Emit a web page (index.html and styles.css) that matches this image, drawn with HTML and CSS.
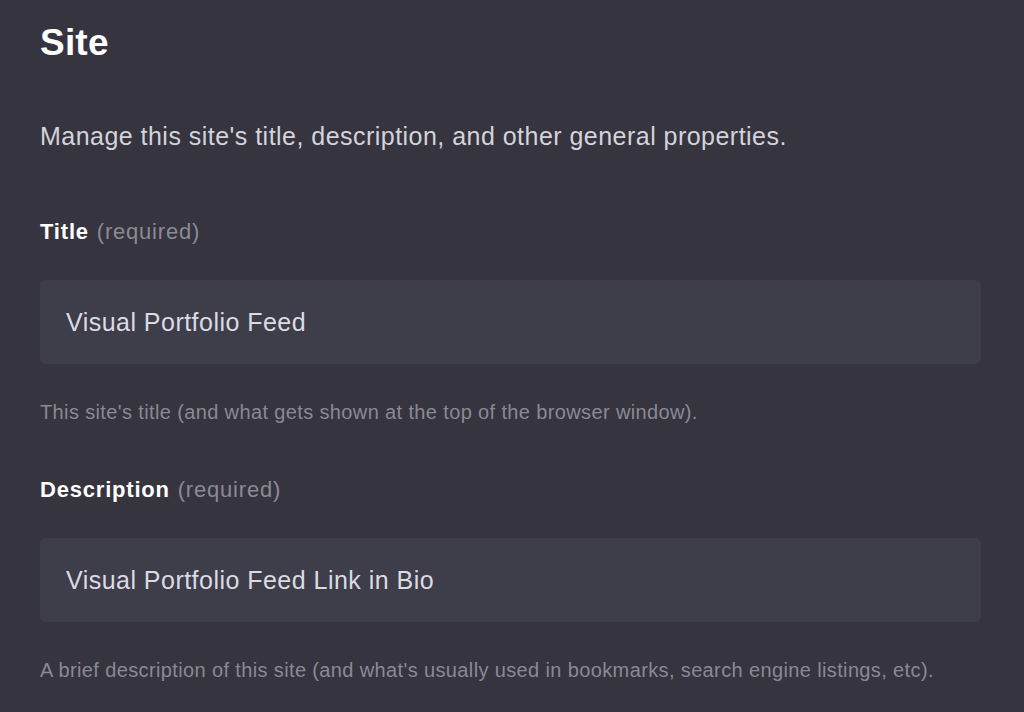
FILE: index.html
```html
<!DOCTYPE html>
<html lang="en">
<head>
<meta charset="utf-8">
<title>Site</title>
<link rel="stylesheet" href="styles.css">
</head>
<body>
<main class="settings">
  <h1 class="settings-title">Site</h1>
  <p class="settings-intro">Manage this site's title, description, and other general properties.</p>

  <div class="field field-first">
    <label class="field-label" for="site-title">Title <span class="field-req">(required)</span></label>
    <input class="field-input" id="site-title" type="text" value="Visual Portfolio Feed">
    <p class="field-help">This site's title (and what gets shown at the top of the browser window).</p>
  </div>

  <div class="field">
    <label class="field-label" for="site-desc">Description <span class="field-req">(required)</span></label>
    <input class="field-input" id="site-desc" type="text" value="Visual Portfolio Feed Link in Bio">
    <p class="field-help">A brief description of this site (and what's usually used in bookmarks, search engine listings, etc).</p>
  </div>
</main>
</body>
</html>
```

FILE: styles.css
```css
html, body {
  margin: 0;
  padding: 0;
  background: #35343f;
  height: 100%;
}

body {
  font-family: "Liberation Sans", Arial, sans-serif;
  color: #d6d5dc;
  overflow: hidden;
}

.settings {
  width: 941px;
  padding: 21px 0 0 40px;
}

.settings-title {
  margin: 0;
  font-size: 37px;
  line-height: 44px;
  font-weight: 700;
  letter-spacing: 0.2px;
  color: #ffffff;
}

.settings-intro {
  margin: 55px 0 0;
  font-size: 25px;
  line-height: 32px;
  letter-spacing: 0.47px;
  color: #d4d3da;
}

.field {
  display: flex;
  flex-direction: column;
  margin-top: 50.5px;
}

.field-first {
  margin-top: 66px;
}

.field-label {
  font-size: 22px;
  line-height: 28px;
  font-weight: 700;
  letter-spacing: 0.8px;
  color: #ffffff;
}

.field-req {
  font-weight: 400;
  color: #8b8a96;
  margin-left: 1px;
}

.field-input {
  margin-top: 34px;
  box-sizing: border-box;
  width: 100%;
  height: 84px;
  padding: 1px 26px 0;
  border: none;
  border-radius: 6px;
  background: #3e3d4a;
  color: #dcdbe2;
  font-family: "Liberation Sans", Arial, sans-serif;
  font-size: 25px;
  letter-spacing: 0.47px;
  outline: none;
}

.field-help {
  margin: 35px 0 0;
  font-size: 20px;
  line-height: 26px;
  letter-spacing: 0.37px;
  color: #8a8995;
}
```
